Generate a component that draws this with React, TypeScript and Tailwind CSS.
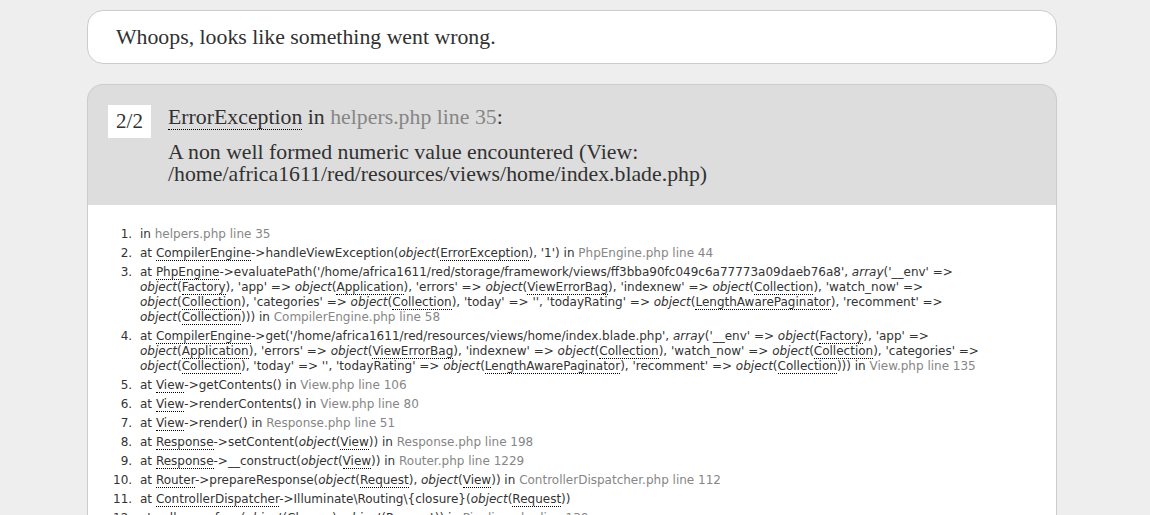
import React from "react";

const serif = "font-['Liberation_Serif','Times_New_Roman',serif]";

const Abbr = ({ children }: { children: React.ReactNode }) => (
  <span className="border-b border-dotted border-black">{children}</span>
);

const Obj = ({ name }: { name: string }) => (
  <>
    <em>object</em>(<Abbr>{name}</Abbr>)
  </>
);

const File = ({ children }: { children: React.ReactNode }) => (
  <span className="text-[#868686]">{children}</span>
);

const Arr = () => (
  <>
    <em>array</em>('__env' =&gt; <Obj name="Factory" />, 'app' =&gt; <Obj name="Application" />, 'errors' =&gt;{" "}
    <Obj name="ViewErrorBag" />, 'indexnew' =&gt; <Obj name="Collection" />, 'watch_now' =&gt; <Obj name="Collection" />,
    'categories' =&gt; <Obj name="Collection" />, 'today' =&gt; '', 'todayRating' =&gt; <Obj name="LengthAwarePaginator" />,
    'recomment' =&gt; <Obj name="Collection" />)
  </>
);

const traces: React.ReactNode[] = [
  <>
    in <File>helpers.php line 35</File>
  </>,
  <>
    at <Abbr>CompilerEngine</Abbr>-&gt;handleViewException(<Obj name="ErrorException" />, '1') in{" "}
    <File>PhpEngine.php line 44</File>
  </>,
  <>
    at <Abbr>PhpEngine</Abbr>-&gt;evaluatePath('/home/africa1611/red/storage/framework/views/ff3bba90fc049c6a77773a09daeb76a8', <Arr />) in{" "}
    <File>CompilerEngine.php line 58</File>
  </>,
  <>
    at <Abbr>CompilerEngine</Abbr>-&gt;get('/home/africa1611/red/resources/views/home/index.blade.php', <Arr />) in{" "}
    <File>View.php line 135</File>
  </>,
  <>
    at <Abbr>View</Abbr>-&gt;getContents() in <File>View.php line 106</File>
  </>,
  <>
    at <Abbr>View</Abbr>-&gt;renderContents() in <File>View.php line 80</File>
  </>,
  <>
    at <Abbr>View</Abbr>-&gt;render() in <File>Response.php line 51</File>
  </>,
  <>
    at <Abbr>Response</Abbr>-&gt;setContent(<Obj name="View" />) in <File>Response.php line 198</File>
  </>,
  <>
    at <Abbr>Response</Abbr>-&gt;__construct(<Obj name="View" />) in <File>Router.php line 1229</File>
  </>,
  <>
    at <Abbr>Router</Abbr>-&gt;prepareResponse(<Obj name="Request" />, <Obj name="View" />) in{" "}
    <File>ControllerDispatcher.php line 112</File>
  </>,
  <>
    at <Abbr>ControllerDispatcher</Abbr>-&gt;Illuminate\Routing\{"{closure}"}(<Obj name="Request" />)
  </>,
  <>
    at call_user_func(<Obj name="Closure" />, <Obj name="Request" />) in <File>Pipeline.php line 139</File>
  </>,
];

export default function App() {
  return (
    <div className="min-h-screen bg-[#eeeeee] p-[10px] text-[#333]">
      <div className="ml-[77px] w-[970px]">
        <div className="rounded-[16px] border border-[#cccccc] bg-white px-[28px] py-[14px]">
          <h1 className={`${serif} text-[21.8px] leading-[24px] text-[#313131]`}>Whoops, looks like something went wrong.</h1>
        </div>

        <div className="mt-[20px]">
          <div className="flex rounded-t-[16px] border border-b-0 border-[#cccccc] bg-[#dddddd] p-[20px]">
            <span className={`${serif} h-[33px] w-[43px] shrink-0 bg-white text-center text-[21px] leading-[33px]`}>2/2</span>
            <div className={`${serif} ml-[17px] text-[21.8px] text-[#313131]`}>
              <div className="mb-[12px] leading-[24px]">
                <Abbr>ErrorException</Abbr> in <span className="text-[#868686]">helpers.php line 35</span>:
              </div>
              <div className="leading-[22px]">
                A non well formed numeric value encountered (View:
                <br />
                /home/africa1611/red/resources/views/home/index.blade.php)
              </div>
            </div>
          </div>

          <div className="border-x border-[#cccccc] bg-white px-[28px] pt-[10px] pb-[10px]">
            <ol className="list-decimal py-[10px] font-['DejaVu_Sans',Verdana,sans-serif] text-[12px] leading-[15px]">
              {traces.map((t, i) => (
                <li key={i} className="ml-[20px] px-[4px] py-[2px]">
                  {t}
                </li>
              ))}
            </ol>
          </div>
        </div>
      </div>
    </div>
  );
}
